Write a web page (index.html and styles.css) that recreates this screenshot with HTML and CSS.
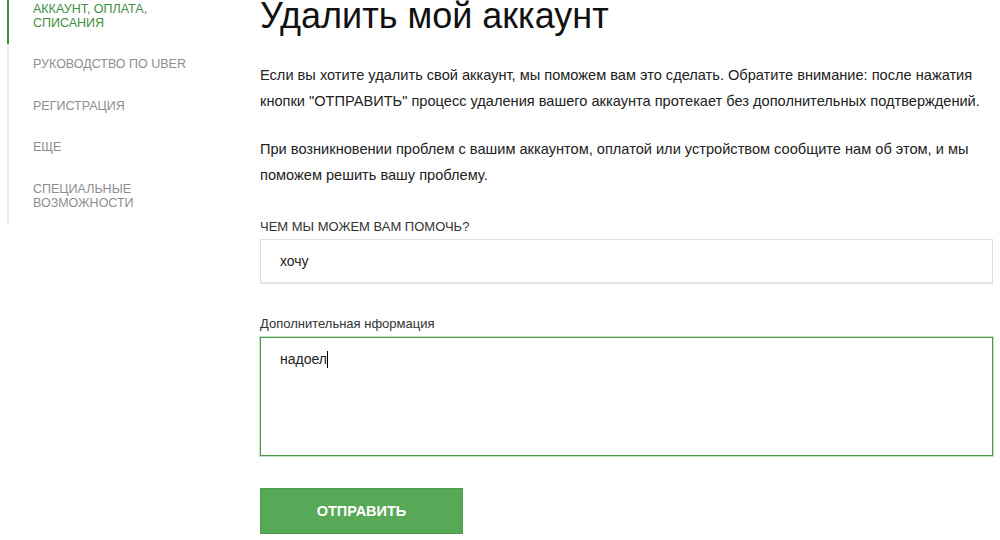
FILE: index.html
```html
<!DOCTYPE html>
<html lang="ru">
<head>
  <meta charset="UTF-8">
  <meta name="viewport" content="width=device-width, initial-scale=1.0">
  <link rel="stylesheet" href="styles.css">
</head>
<body>

<div id="page-container">
  <ul id="sidebar">
    <li class="active">АККАУНТ, ОПЛАТА,<br>СПИСАНИЯ</li>
    <li>РУКОВОДСТВО ПО UBER</li>
    <li>РЕГИСТРАЦИЯ</li>
    <li>ЕЩЕ</li>
    <li>СПЕЦИАЛЬНЫЕ<br>ВОЗМОЖНОСТИ</li>
  </ul>

  <div id="main-content">
    <h1>Удалить мой аккаунт</h1>

    <p>Если вы хотите удалить свой аккаунт, мы поможем вам это сделать. Обратите внимание: после нажатия кнопки "ОТПРАВИТЬ" процесс удаления вашего аккаунта протекает без дополнительных подтверждений.</p>
    <p>При возникновении проблем с вашим аккаунтом, оплатой или устройством сообщите нам об этом, и мы поможем решить вашу проблему.</p>

    <!-- request form -->
    <div class="field">
      <label>ЧЕМ МЫ МОЖЕМ ВАМ ПОМОЧЬ?</label>
      <div class="input">хочу</div>
    </div>

    <div class="field">
      <label>Дополнительная нформация</label>
      <div class="textarea">надоел<span class="caret"></span></div>
    </div>

    <button class="send-btn">ОТПРАВИТЬ</button>
  </div>
</div>

</body>
</html>
```

FILE: styles.css
```css
    body {
      font-family: 'Liberation Sans', Arial, sans-serif;
      margin: 0;
      overflow: hidden;
      background-color: #fff;
      color: #222;
    }

    #page-container {
      display: flex;
      align-items: flex-start;
      padding-left: 7px;
    }

    #sidebar {
      list-style: none;
      margin: -12px 0 0 0;
      padding: 0;
      width: 251px;
      border-left: 2px solid #eee;
      flex-shrink: 0;
    }

    #sidebar li {
      font-size: 12.5px;
      line-height: 14px;
      padding: 13.75px 0 13.75px 24px;
      margin-left: -2px;
      border-left: 2px solid transparent;
      color: #8e8e8e;
    }

    #sidebar li.active {
      color: #3f8f3f;
      border-left-color: #3f8f3f;
    }

    #main-content {
      width: 733px;
    }

    h1 {
      font-size: 36px;
      font-weight: normal;
      line-height: 31px;
      margin: 0 0 31px 0;
      color: #111;
    }

    p {
      font-size: 14.6px;
      line-height: 26px;
      margin: 0 0 22px 0;
      margin-right: -6px;
    }

    .field {
      margin-top: 31px;
    }

    .field + .field {
      margin-top: 32px;
    }

    label {
      display: block;
      font-size: 13px;
      line-height: 16px;
      margin-bottom: 4px;
      color: #333;
    }

    .input {
      height: 42px;
      border: 1px solid #ddd;
      border-bottom: 2px solid #e4e4e4;
      padding: 0 19px;
      font-size: 14px;
      line-height: 42px;
    }

    .field + .field label {
      margin-bottom: 5px;
    }

    .textarea {
      border: 1px solid #4a9a4a;
      box-shadow: 0 0 0 1px #c4e2c4;
      padding: 12px 19px;
      box-sizing: border-box;
      height: 119px;
      font-size: 14px;
      line-height: 18px;
    }

    .caret {
      display: inline-block;
      width: 1px;
      height: 17px;
      background: #000;
      vertical-align: -4px;
    }

    .send-btn {
      display: block;
      margin-top: 32px;
      width: 203px;
      height: 46px;
      background-color: #58a957;
      border: 1px solid #4c9a4c;
      color: #fff;
      font-family: inherit;
      font-size: 14.5px;
      font-weight: bold;
      cursor: pointer;
    }
```
